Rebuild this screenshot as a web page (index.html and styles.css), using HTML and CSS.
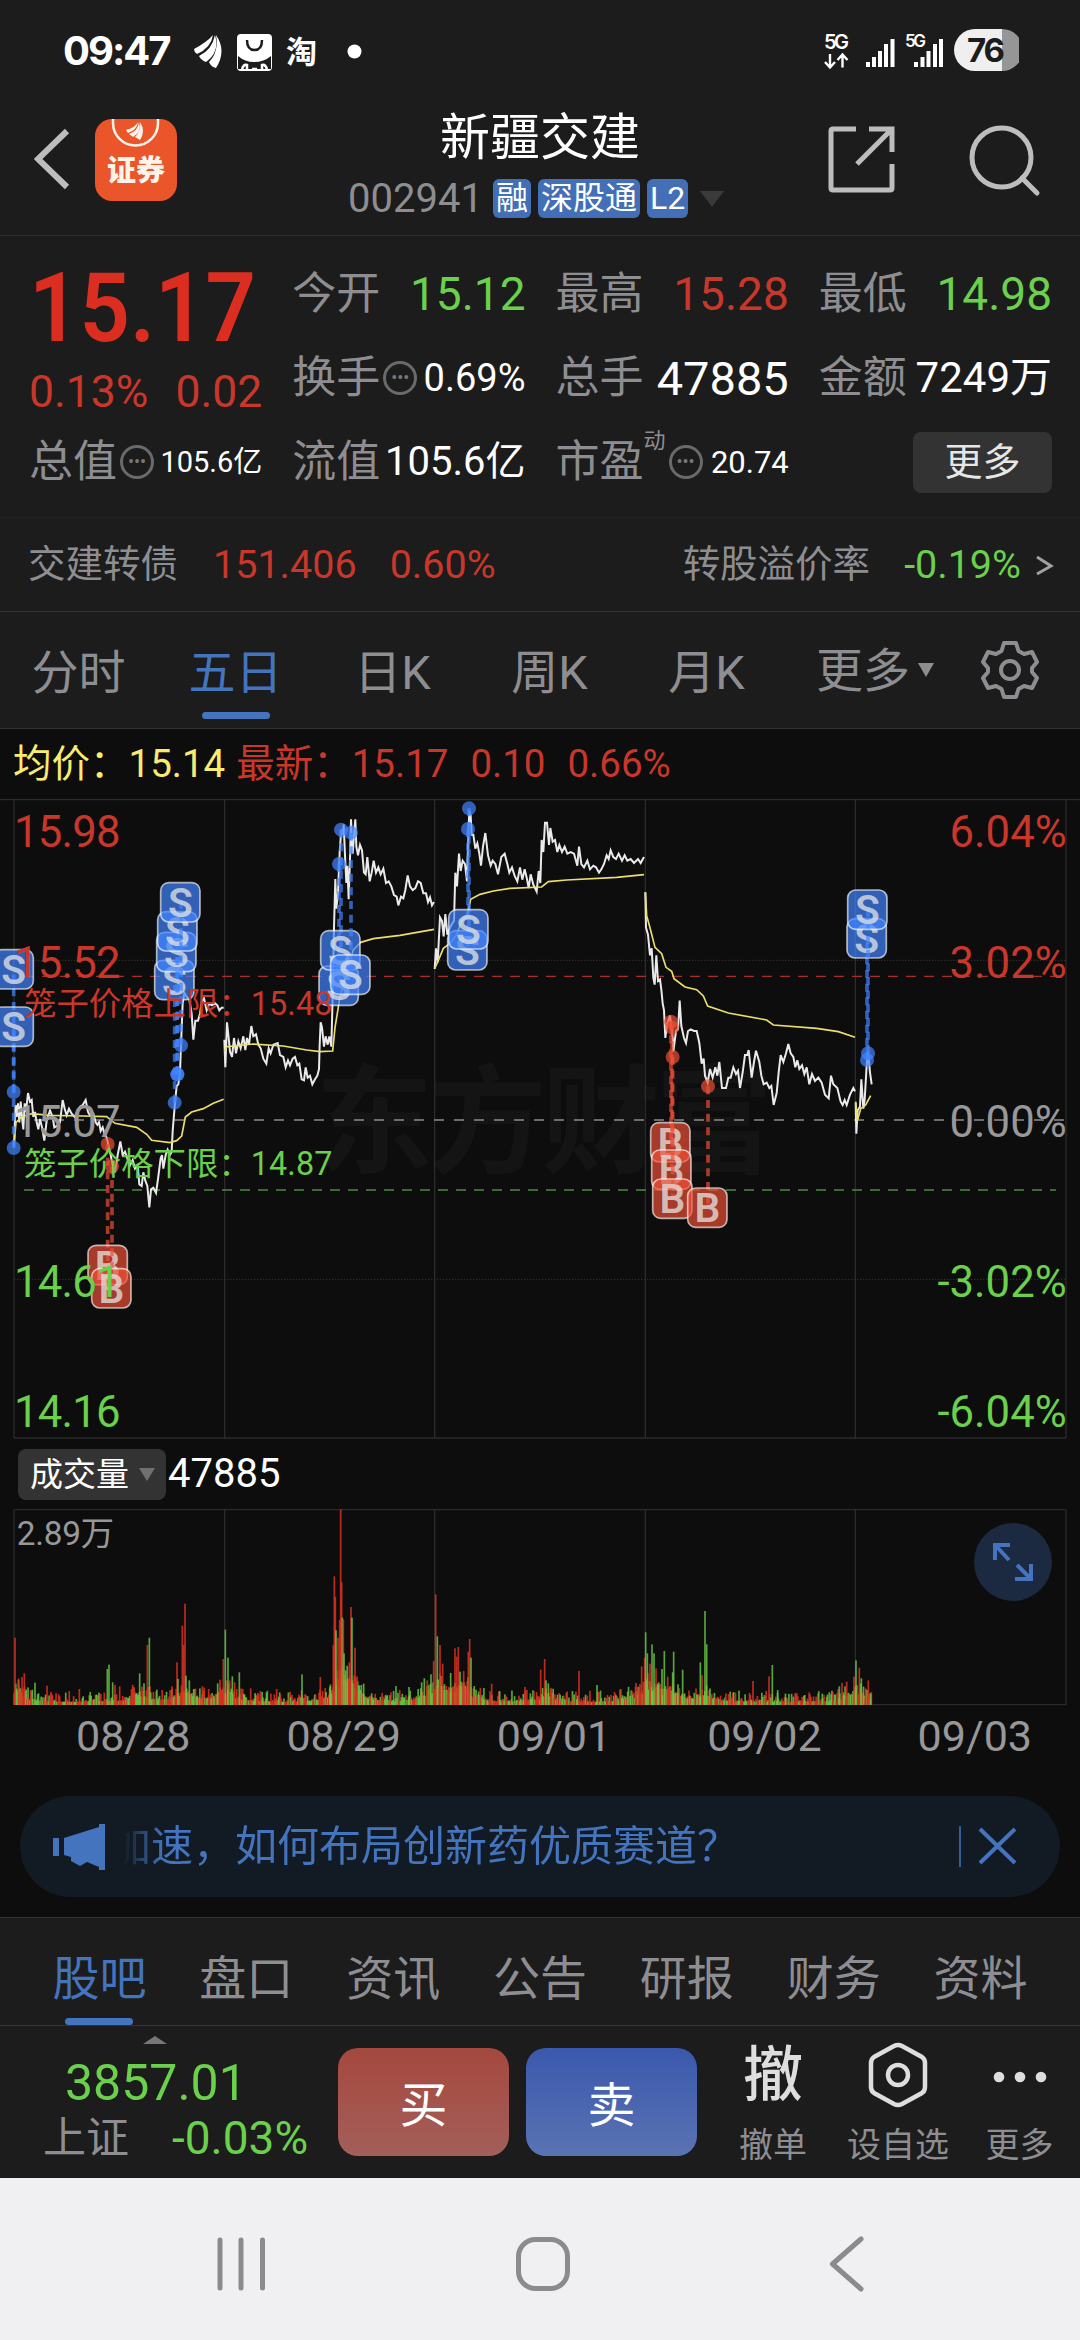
FILE: index.html
```html
<!DOCTYPE html>
<html lang="zh-CN">
<head>
    <meta charset="UTF-8">
    <meta name="viewport" content="width=device-width, initial-scale=1.0">
    <title>新疆交建 002941</title>
    <link rel="stylesheet" href="styles.css">
</head>
<body>
    <div class="status-bar">
        <span class="clock">09:47</span>
        <svg class="status-left" width="190" height="50" viewBox="0 0 190 50">
            <g fill="#fff">
                <path d="M1 15 Q14 8 20 1 Q18 14 4 20 Q1 18 1 15z"/>
                <path d="M6 22 Q19 16 22 1 Q27 18 13 28 Q8 26 6 22z"/>
                <path d="M16 28 Q26 18 23 1 Q34 17 23 34 Q18 33 16 28z"/>
                <rect x="44" y="0" width="35" height="37" rx="4"/>
            </g>
            <path d="M54 6 Q54 16 61.500 16 Q69 16 69 6" fill="none" stroke="#1c1c1c" stroke-width="2.500"/>
            <path d="M45 22 Q52 28 61 28 Q71 28 78 22 V35 H45z" fill="#1c1c1c"/>
            <path d="M49 36 Q50 30 54 31 V36 M69 36 V31 Q73 30 74 36 M59 35 h5" fill="none" stroke="#fff" stroke-width="2.500"/>
            <text x="93" y="29" class="tao">淘</text>
            <circle cx="161.500" cy="17.500" r="7" fill="#fff"/>
        </svg>
        <svg class="status-right" width="195" height="44" viewBox="0 0 195 44">
            <text x="0" y="20" class="net" textLength="25">5G</text>
            <path d="M6 25 V38 M1 33 L6 38.500 L11 33 M18.500 38.500 V25.500 M13.500 31 L18.500 25.500 L23.500 31" fill="none" stroke="#fff" stroke-width="2.400"/>
            <path d="M44 38 v-5 M50 38 v-10 M56 38 v-16 M62 38 v-23 M68.500 38 v-28" stroke="#fff" stroke-width="4"/>
            <text x="81" y="18" class="net small" textLength="21">5G</text>
            <path d="M92 38 v-5 M98.500 38 v-10 M104.500 38 v-16 M111 38 v-23 M117 38 v-28" stroke="#fff" stroke-width="4"/>
            <path d="M151 0 H178 V42 H151 A21 21 0 0 1 151 0z" fill="#efefef"/>
            <path d="M178 0 A21 21 0 0 1 178 42z" fill="#969696"/>
            <text x="161" y="33" class="battery">76</text>
        </svg>
    </div>

    <div class="header">
        <svg class="back" width="36" height="62" viewBox="0 0 36 62">
            <path d="M33 3 L4 31 L33 59" fill="none" stroke="#bdbdbd" stroke-width="6"/>
        </svg>
        <svg class="logo" width="82" height="82" viewBox="0 0 82 82">
            <rect width="82" height="82" rx="17" fill="#ea5529"/>
            <path d="M18 0 V4 A22.500 22.500 0 0 0 63 4 V0" fill="none" stroke="#fff3ea" stroke-width="2.500"/>
            <g fill="#fff3ea">
                <path d="M31 11 Q41 8 43 3 Q42 11 33 14z"/>
                <path d="M34 15 Q43 12 44 3 Q47 13 38 18z"/>
                <path d="M40 18 Q46 12 45 3 Q51 12 45 21z"/>
            </g>
            <text x="41" y="62" text-anchor="middle" class="logo-text">证券</text>
        </svg>
        <div class="title">
            <div class="stock-name">新疆交建</div>
            <div class="stock-code">
                <span class="code">002941</span>
                <span class="tag">融</span>
                <span class="tag">深股通</span>
                <span class="tag">L2</span>
                <i class="tri-down"></i>
            </div>
        </div>
        <svg class="share" width="68" height="68" viewBox="0 0 68 68">
            <path d="M28 3 H5 Q3 3 3 5 V62 Q3 64 5 64 H62 Q64 64 64 62 V38 M41 3 H64 V26 M63 4 L29 38" fill="none" stroke="#bdbdbd" stroke-width="5"/>
        </svg>
        <svg class="search" width="72" height="72" viewBox="0 0 72 72">
            <circle cx="32.500" cy="32.500" r="29.500" fill="none" stroke="#bdbdbd" stroke-width="5"/>
            <path d="M53 53 L68 68" stroke="#bdbdbd" stroke-width="5" stroke-linecap="round"/>
        </svg>
    </div>

    <div class="quote">
        <div class="now">
            <div class="price">15.17</div>
            <div class="change"><span>0.13%</span><span>0.02</span></div>
        </div>
        <div class="cell"><label>今开</label><b class="green s46">15.12</b></div>
        <div class="cell"><label>最高</label><b class="red s46">15.28</b></div>
        <div class="cell"><label>最低</label><b class="green s46">14.98</b></div>
        <div class="cell"><label>换手</label><i class="more-dot">•••</i><b class="s39">0.69%</b></div>
        <div class="cell"><label>总手</label><b class="s47">47885</b></div>
        <div class="cell"><label>金额</label><b class="s43">7249万</b></div>
        <div class="cell"><label>总值</label><i class="more-dot">•••</i><b class="s30">105.6亿</b></div>
        <div class="cell"><label>流值</label><b class="s41">105.6亿</b></div>
        <div class="cell"><label>市盈</label><sup>动</sup><i class="more-dot">•••</i><b class="s31">20.74</b></div>
        <div class="cell"><button class="more-btn">更多</button></div>
    </div>

    <div class="bond">
        <span class="bond-name">交建转债</span>
        <span class="red bond-price">151.406</span>
        <span class="red">0.60%</span>
        <span class="bond-rate">转股溢价率</span>
        <span class="green">-0.19%</span>
        <svg width="18" height="26" viewBox="0 0 18 26"><path d="M1 5 L15 14 L1 22" fill="none" stroke="#a0a0a0" stroke-width="3"/></svg>
    </div>

    <div class="tabs">
        <span>分时</span>
        <span class="active">五日</span>
        <span>日K</span>
        <span>周K</span>
        <span>月K</span>
        <span class="tab-more">更多<i></i></span>
        <svg width="60" height="60" viewBox="0 0 60 60">
            <path d="M24 3 H36 L38.500 11 L44 14 L52 12 L57 22 L52 28 V32 L57 38 L52 48 L44 46 L38.500 49 L36 57 H24 L21.500 49 L16 46 L8 48 L3 38 L8 32 V28 L3 22 L8 12 L16 14 L21.500 11z" fill="none" stroke="#8e8e92" stroke-width="4" stroke-linejoin="round"/>
            <circle cx="30" cy="30" r="9" fill="none" stroke="#8e8e92" stroke-width="4"/>
        </svg>
    </div>

    <div class="info">
        <span class="yellow">均价：15.14</span>
        <span class="red">最新：15.17</span>
        <span class="red">0.10</span>
        <span class="red">0.66%</span>
    </div>

    <!-- three chart units per pixel -->
    <svg class="chart" viewBox="0 27 3240 1920">
        <text class="watermark" x="945" y="1122" textLength="1375">东方财富</text>
        <g class="grid">
            <path d="M0 28.500 H3240 M42 1944 H3198"/>
            <path d="M42 30 V1944 M674 30 V1944 M1304 30 V1944 M1936 30 V1944 M2566 30 V1944 M3198 30 V1944"/>
            <path class="dots" d="M42 511 H3198 M42 1468 H3198"/>
        </g>
        <path class="zero" d="M102 990 H3198"/>
        <path class="cage-top" d="M72 559 H3170"/>
        <path class="cage-bottom" d="M72 1200 H3168"/>
        <g id="price-lines"></g>
        <g id="marks"></g>
        <g class="axis">
            <text x="42" y="171" class="f-red" textLength="320">15.98</text>
            <text x="42" y="564" class="f-red" textLength="320">15.52</text>
            <text x="42" y="1041" class="f-gray" textLength="320">15.07</text>
            <text x="42" y="1520" class="f-green" textLength="320">14.61</text>
            <text x="42" y="1912" class="f-green" textLength="320">14.16</text>
            <text x="3200" y="171" class="f-red end">6.04%</text>
            <text x="3200" y="564" class="f-red end">3.02%</text>
            <text x="3200" y="1041" class="f-gray end">0.00%</text>
            <text x="3200" y="1520" class="f-green end">-3.02%</text>
            <text x="3200" y="1912" class="f-green end">-6.04%</text>
        </g>
        <g class="cage">
            <text x="72" y="675" class="f-red" textLength="925">笼子价格上限：15.48</text>
            <text x="72" y="1154" class="f-green" textLength="925">笼子价格下限：14.87</text>
        </g>
    </svg>

    <div class="volume-head">
        <button>成交量<i></i></button>
        <span>47885</span>
    </div>

    <div class="volume">
        <svg viewBox="0 27 3240 591">
            <path class="vgrid" d="M42 28.500 H3198 M42 28 V614 M674 28 V614 M1304 28 V614 M1936 28 V614 M2566 28 V614 M3198 28 V614 M42 614 H3198"/>
            <g id="bars"></g>
            <text x="50" y="135" class="vol-max" textLength="292">2.89万</text>
        </svg>
        <div class="expand">
            <svg width="42" height="42" viewBox="0 0 42 42">
                <path d="M17 19 L4 5 M3 19 V4 H18 M25 24 L38 37 M39 23 V38 H23" fill="none" stroke="#4374bd" stroke-width="4"/>
            </svg>
        </div>
    </div>

    <div class="dates">
        <span>08/28</span><span>08/29</span><span>09/01</span><span>09/02</span><span>09/03</span>
    </div>

    <div class="notice">
        <svg class="horn" width="52" height="46" viewBox="0 0 52 46">
            <path d="M0 14 H6 V32 H0z M11 14 L46 3 V0 H52 V46 H46 V43 L34 38 L27 42 L18 37 V33 L11 31z" fill="#4374bd"/>
        </svg>
        <div class="notice-text"><span>加速，如何布局创新药优质赛道？</span></div>
        <svg class="close" width="60" height="44" viewBox="0 0 60 44">
            <path d="M1 1 V42" stroke="#4374bd" stroke-width="1.500"/>
            <path d="M21 4 L56 38 M56 4 L21 38" stroke="#4374bd" stroke-width="4"/>
        </svg>
    </div>

    <div class="sub-tabs">
        <span class="active">股吧</span>
        <span>盘口</span>
        <span>资讯</span>
        <span>公告</span>
        <span>研报</span>
        <span>财务</span>
        <span>资料</span>
    </div>

    <div class="trade-bar">
        <div class="index">
            <i class="tri-up"></i>
            <div class="index-value">3857.01</div>
            <div class="index-row"><span>上证</span><span class="green">-0.03%</span></div>
        </div>
        <button class="buy">买</button>
        <button class="sell">卖</button>
        <div class="tool cancel"><em>撤</em><span>撤单</span></div>
        <div class="tool pick">
            <svg width="60" height="66" viewBox="0 0 60 66">
                <path d="M26 4 Q30 2 34 4 L54 15 Q57 17 57 21 V45 Q57 49 54 51 L34 62 Q30 64 26 62 L6 51 Q3 49 3 45 V21 Q3 17 6 15z" fill="none" stroke="#dedede" stroke-width="4.500"/>
                <circle cx="30" cy="33" r="10" fill="none" stroke="#dedede" stroke-width="4.500"/>
            </svg>
            <span>设自选</span>
        </div>
        <div class="tool rest">
            <svg width="54" height="66" viewBox="0 0 54 66" fill="#dedede">
                <circle cx="6" cy="35" r="5.300"/><circle cx="27" cy="35" r="5.300"/><circle cx="48" cy="35" r="5.300"/>
            </svg>
            <span>更多</span>
        </div>
    </div>

    <div class="nav-bar">
        <svg width="1080" height="162" viewBox="0 0 1080 162" fill="none" stroke="#8b8b8b" stroke-width="5">
            <path d="M220 62 V110 M241 62 V110 M262.500 62 V110" stroke-linecap="round"/>
            <rect x="518.500" y="61.500" width="49" height="49" rx="17"/>
            <path d="M861 61 L832.500 86 L861 111" stroke-linecap="round" stroke-linejoin="round"/>
        </svg>
    </div>

    <script src="chart.js"></script>
</body>
</html>
```
FILE: styles.css
```css
* {
    box-sizing: border-box;
}

body {
    margin: 0;
    width: 1080px;
    height: 2340px;
    overflow: hidden;
    background: #0d0d0d;
    color: #fff;
    font-family: Roboto, "Noto Sans CJK SC", sans-serif;
    line-height: 1;
    display: flex;
    flex-direction: column;
}

button {
    border: none;
    padding: 0;
    color: #fff;
    font-family: inherit;
    line-height: 1;
}

i, em {
    font-style: normal;
}

svg {
    display: block;
    flex: none;
}

.red { color: #c9372b; }
.green { color: #6bd04b; }
.yellow { color: #f8ec70; }
.f-red { fill: #c9372b; }
.f-green { fill: #6bd04b; }
.f-gray { fill: #98989a; }

/* status bar */
.status-bar {
    height: 100px;
    flex: none;
    display: flex;
    align-items: flex-start;
    padding: 29px 61px 0 63px;
    background: #1c1c1c;
}

.clock {
    width: 130px;
    font: 700 40px/44px Inter, sans-serif;
    letter-spacing: -2px;
    white-space: nowrap;
}

.status-left {
    margin-top: 5px;
}

.status-right {
    margin-left: auto;
}

.tao {
    font: 700 31px "Noto Sans CJK SC", sans-serif;
    fill: #fff;
}

.net {
    font: 600 20px Inter, sans-serif;
    fill: #fff;
}

.net.small {
    font-size: 17px;
}

.battery {
    font: 700 33px Inter, sans-serif;
    letter-spacing: -2px;
    fill: #1c1c1c;
    text-anchor: middle;
}

/* title */
.header {
    height: 136px;
    flex: none;
    display: flex;
    align-items: flex-start;
    background: #1c1c1c;
    border-bottom: 1px solid #303030;
}

.back {
    margin: 28px 25px 0 34px;
}

.logo {
    margin-top: 19px;
}

.logo-text {
    font: 900 29px "Noto Sans CJK SC", sans-serif;
    fill: #fff3ea;
}

.title {
    width: 540px;
    flex: none;
    margin-left: 114px;
    padding: 11px 0 0 57px;
}

.stock-name {
    margin-left: 92px;
    font-size: 50px;
    line-height: 54px;
}

.stock-code {
    display: flex;
    align-items: center;
    margin-top: 14px;
    height: 39px;
    gap: 7px;
}

.code {
    width: 138px;
    color: #8e8e92;
    font-size: 40px;
}

.tag {
    height: 39px;
    padding: 0 3px;
    border-radius: 6px;
    background: #426fb5;
    font-size: 32px;
    line-height: 38px;
}

.tri-down {
    margin-left: 5px;
    border: 12px solid transparent;
    border-top: 16px solid #3a3a3a;
    border-bottom: 0;
}

.share {
    margin-left: -3px;
    margin-top: 26px;
}

.search {
    margin: 25px 0 0 73px;
}

/* quote */
.quote {
    height: 281px;
    flex: none;
    display: grid;
    grid-template-columns: repeat(4, minmax(0, 1fr));
    grid-template-rows: repeat(3, 84px);
    column-gap: 30px;
    padding: 16px 28px 0 29px;
    background: #1c1c1c;
}

.now {
    grid-row: span 2;
    padding-top: 8px;
}

.price {
    color: #db2d20;
    font-size: 96px;
    font-weight: 600;
    line-height: 96px;
    white-space: nowrap;
    transform: scaleX(0.92);
    transform-origin: left;
}

.change {
    display: flex;
    justify-content: space-between;
    margin-top: 14px;
    color: #c9372b;
    font-size: 44.5px;
}

.cell {
    display: flex;
    align-items: center;
    white-space: nowrap;
}

.cell label {
    color: #8e8e92;
    font-size: 44px;
}

.cell b {
    margin-left: auto;
    font-weight: 400;
}

.cell sup {
    align-self: flex-start;
    margin-top: 10px;
    color: #8e8e92;
    font-size: 22px;
}

.more-dot {
    width: 34px;
    height: 34px;
    margin-left: 3px;
    flex: none;
    border: 3px solid #6a6a6c;
    border-radius: 50%;
    color: #77777a;
    font-size: 18px;
    line-height: 28px;
    text-align: center;
}

.s46 { font-size: 46px; }
.s47 { font-size: 47px; font-weight: 500; }
.s43 { font-size: 42px; }
.s41 { font-size: 40px; }
.s39 { font-size: 38px; }
.s31 { font-size: 31px; }
.s30 { font-size: 29px; }

.more-btn {
    width: 139px;
    height: 61px;
    margin-left: auto;
    border-radius: 8px;
    background: #333;
    color: #e6e6e6;
    font-size: 38px;
}

.bond {
    height: 95px;
    flex: none;
    display: flex;
    align-items: center;
    padding: 1px 26px 0 28px;
    background: #1c1c1c;
    border-bottom: 1px solid #333;
    box-shadow: inset 0 1px #222;
    font-size: 39.5px;
}

.bond-name, .bond-rate {
    color: #8e8e92;
    font-size: 37.5px;
}

.bond-price {
    margin: 0 33px 0 35px;
}

.bond-rate {
    margin: 0 34px 0 auto;
}

.bond svg {
    margin-left: 15px;
}

/* period tabs */
.tabs {
    height: 117px;
    flex: none;
    display: flex;
    align-items: center;
    background: #1c1c1c;
    border-bottom: 1px solid #333;
    color: #8e8e92;
    font-size: 47px;
}

.tabs span {
    position: relative;
    width: 157px;
    height: 116px;
    line-height: 121px;
    text-align: center;
    white-space: nowrap;
}

.active {
    color: #4374bd;
}

.active::after {
    content: "";
    position: absolute;
    left: 50%;
    bottom: 9px;
    width: 68px;
    height: 7px;
    margin-left: -34px;
    border-radius: 4px;
    background: #4374bd;
}

.tabs .tab-more {
    width: 195px;
    padding-left: 31px;
    display: flex;
    align-items: center;
}

.tab-more i {
    margin-left: 8px;
    border: 8px solid transparent;
    border-top: 14px solid #8e8e92;
    border-bottom: 0;
}

.info {
    height: 70px;
    flex: none;
    display: flex;
    align-items: center;
    padding: 1px 0 0 13px;
    font-size: 38.5px;
}

.info span {
    margin-right: 22px;
}

.info .yellow {
    margin-right: 11px;
}

/* price chart */
.chart {
    width: 1080px;
    height: 640px;
}

.watermark {
    font: 700 355px "Noto Sans CJK SC", sans-serif;
    fill: #141414;
}

.grid path {
    fill: none;
    stroke: #2b2b2b;
    stroke-width: 4;
}

.grid .dots {
    stroke: #333;
    stroke-width: 3;
    stroke-dasharray: 4 5;
}

.zero {
    stroke: #8c8c8e;
    stroke-width: 5;
    stroke-dasharray: 30 30;
}

.cage-top {
    stroke: #a32f28;
    stroke-width: 4;
    stroke-dasharray: 30 24;
}

.cage-bottom {
    stroke: #46903a;
    stroke-width: 4;
    stroke-dasharray: 30 24;
}

.price-line, .avg-line {
    fill: none;
    stroke: #eaeaea;
    stroke-width: 6;
}

.avg-line {
    stroke: #eadf6b;
    stroke-width: 5;
}

.stem {
    stroke-width: 11;
    stroke-dasharray: 24 17;
}

.mark {
    stroke: #fff;
    stroke-opacity: 0.65;
    stroke-width: 5;
}

.mark-text {
    font: 600 122px Roboto, sans-serif;
    text-anchor: middle;
    fill: #e4e4e4;
    fill-opacity: 0.75;
}

.axis {
    font-size: 131px;
}

.end {
    text-anchor: end;
}

.cage {
    font-size: 97px;
}

/* volume */
.volume-head {
    height: 70px;
    flex: none;
    display: flex;
    align-items: center;
    padding-left: 18px;
    font-size: 40px;
}

.volume-head button {
    width: 148px;
    height: 51px;
    margin-right: 2px;
    padding-left: 12px;
    display: flex;
    align-items: center;
    border-radius: 8px;
    background: #333;
    font-size: 33px;
}

.volume-head i {
    margin-left: 10px;
    border: 8px solid transparent;
    border-top: 13px solid #707070;
    border-bottom: 0;
}

.volume {
    position: relative;
    height: 197px;
    flex: none;
}

.volume > svg {
    width: 1080px;
    height: 197px;
}

.vgrid {
    fill: none;
    stroke: #2b2b2b;
    stroke-width: 4;
}

.vol-max {
    font-size: 100px;
    fill: #98989a;
}

.expand {
    position: absolute;
    right: 28px;
    top: 14px;
    width: 78px;
    height: 78px;
    display: flex;
    align-items: center;
    justify-content: center;
    border-radius: 50%;
    background: #1c2a41;
}

.dates {
    height: 90px;
    flex: none;
    display: flex;
    padding: 5px 0 0 28px;
    color: #98989a;
    font-size: 43px;
    line-height: 50px;
}

.dates span {
    width: 210.5px;
    text-align: center;
}

/* notice */
.notice {
    height: 101px;
    flex: none;
    display: flex;
    align-items: center;
    margin: 0 20px 20px;
    padding: 0 41px 0 33px;
    border-radius: 51px;
    background: #121a24;
    color: #4374bd;
}

.notice-text {
    width: 800px;
    margin-left: 18px;
    overflow: hidden;
    font-size: 42px;
    line-height: 60px;
    white-space: nowrap;
    -webkit-mask-image: linear-gradient(90deg, transparent, #000 40px);
    mask-image: linear-gradient(90deg, transparent, #000 40px);
}

.notice-text span {
    margin-left: -14px;
}

.close {
    margin-left: auto;
}

.sub-tabs {
    height: 109px;
    flex: none;
    display: flex;
    padding: 0 26px;
    background: #1c1c1c;
    border-top: 1px solid #333;
    border-bottom: 1px solid #333;
    color: #8e8e92;
    font-size: 47px;
}

.sub-tabs span {
    position: relative;
    width: 147px;
    line-height: 122px;
    text-align: center;
}

.sub-tabs .active::after {
    bottom: 0;
}

/* bottom bar */
.trade-bar {
    height: 152px;
    flex: none;
    display: flex;
    background: #1c1c1c;
}

.index {
    width: 338px;
    flex: none;
    padding: 10px 0 0 43px;
}

.tri-up {
    display: block;
    width: 0;
    margin-left: 100px;
    border: 12px solid transparent;
    border-bottom: 8px solid #77777a;
    border-top: 0;
}

.index-value {
    margin: 14px 0 7px 22px;
    color: #6bd04b;
    font-size: 50px;
}

.index-row {
    display: flex;
    align-items: center;
    color: #8e8e92;
    font-size: 43px;
}

.index-row .green {
    margin-left: 43px;
    color: #6bd04b;
    font-size: 46px;
}

.buy, .sell {
    width: 171px;
    height: 108px;
    flex: none;
    margin-top: 22px;
    padding-top: 8px;
    border-radius: 20px;
    font-size: 48px;
}

.buy {
    background: linear-gradient(#a5483e, #a35f59);
}

.sell {
    margin-left: 17px;
    background: linear-gradient(#3a58ad, #5a73b3);
}

.tool {
    flex: none;
    display: flex;
    flex-direction: column;
    align-items: center;
    padding-top: 16px;
    color: #8e8e92;
    font-size: 34px;
    white-space: nowrap;
}

.tool span {
    margin-top: 20px;
}

.tool em {
    height: 66px;
    color: #dedede;
    font-size: 60px;
    font-weight: 500;
    line-height: 68px;
}

.cancel { width: 152px; }
.pick { width: 98px; }
.rest { width: 133px; padding-left: 12px; }

.nav-bar {
    height: 162px;
    flex: none;
    background: #f0f0f3;
}
```
FILE: chart.js
```js
// one string per trading day
const prices = [
    "42,1035 45,960 47,915 50,950 54,910 58,965 62,905 67,960 70,985 74,910 78,935 84,880 90,905 95,900 100,950 105,935 110,965 115,985 120,955 126,980 133,1018 140,960 150,930 158,950 163,980 172,975 180,965 188,900 194,925 200,945 207,925 215,940 224,950 232,935 240,920 248,915 257,900 264,935 270,945 280,940 287,965 292,972 297,965 302,990 308,980 314,1000 320,1010 325,1030 332,1060 338,1090 345,1110 353,1060 361,1020 368,1060 375,1050 382,1070 390,1090 398,1075 405,1100 413,1090 418,1145 425,1150 430,1110 436,1135 442,1150 448,1212 453,1160 460,1155 468,1170 474,1130 482,1070 486,1060 490,1100 497,1060 503,1045 510,1060 515,1050 518,990 524,920 530,860 535,855 540,820 543,740 548,620 553,590 560,600 568,610 575,650 580,725 586,670 594,670 600,650 605,615 612,605 620,640 628,620 635,625 645,620 652,625 658,640 665,632 671,632",
    "673,725 676,805 681,675 686,720 690,760 696,775 702,720 708,765 715,730 722,750 730,715 736,755 741,720 747,740 754,685 760,715 768,710 775,740 782,750 790,780 799,795 806,750 812,765 820,740 833,735 840,770 850,775 857,805 864,785 870,800 878,780 885,775 892,800 898,795 905,840 912,843 917,805 923,835 930,830 937,855 945,840 952,830 957,810 959,740 962,675 966,690 972,745 977,715 983,740 988,715 994,745 998,600 1002,400 1006,258 1009,345 1014,300 1019,180 1024,115 1029,130 1031,100 1035,190 1039,270 1042,220 1046,318 1050,200 1053,85 1058,185 1062,130 1066,85 1069,165 1074,190 1080,160 1086,175 1092,240 1097,245 1102,195 1109,265 1115,240 1121,205 1128,240 1135,225 1142,245 1150,228 1158,270 1166,265 1174,280 1182,305 1190,310 1195,335 1203,310 1210,315 1216,290 1223,248 1230,280 1238,290 1246,285 1254,265 1262,270 1270,300 1278,300 1284,325 1290,312 1296,335 1302,325",
    "1304,520 1308,460 1313,500 1320,370 1326,380 1331,425 1336,360 1342,420 1350,400 1358,385 1362,380 1366,240 1371,280 1377,185 1382,235 1388,205 1395,215 1401,265 1405,130 1408,60 1412,75 1415,130 1420,130 1426,170 1432,155 1438,185 1443,220 1449,165 1456,125 1464,190 1472,220 1478,205 1486,215 1494,245 1504,195 1514,185 1522,215 1528,240 1536,225 1544,250 1552,265 1560,225 1567,260 1574,230 1580,255 1586,285 1592,245 1600,275 1610,295 1616,235 1621,270 1625,145 1630,180 1635,95 1641,95 1647,160 1651,110 1658,150 1665,145 1672,180 1678,160 1686,180 1694,165 1702,185 1712,180 1722,185 1732,220 1737,165 1744,215 1752,225 1762,205 1770,230 1780,220 1788,225 1797,240 1804,230 1812,215 1820,190 1826,200 1832,175 1840,195 1848,200 1856,185 1866,205 1874,190 1882,205 1892,200 1902,212 1914,200 1922,212 1932,195",
    "1936,297 1938,400 1944,420 1950,480 1955,460 1960,545 1964,565 1969,480 1974,555 1980,550 1984,580 1988,620 1992,640 1996,720 2001,680 2010,655 2018,720 2020,760 2028,700 2034,695 2039,612 2044,685 2052,720 2058,735 2064,700 2072,695 2082,700 2090,700 2098,735 2105,795 2111,780 2115,830 2123,850 2130,810 2138,835 2146,805 2152,830 2158,790 2166,865 2178,865 2185,835 2192,835 2200,805 2208,825 2214,815 2220,865 2228,820 2235,770 2242,770 2246,755 2255,835 2262,790 2268,757 2278,790 2284,830 2291,855 2300,850 2308,865 2314,860 2321,915 2330,880 2336,820 2342,770 2350,790 2358,765 2365,738 2372,765 2380,775 2386,805 2392,785 2398,810 2406,800 2413,825 2420,805 2428,855 2436,825 2445,845 2455,835 2465,850 2475,885 2486,895 2493,830 2500,855 2512,865 2522,905 2528,915 2534,900 2540,915 2550,885 2560,865 2565,875",
    "2567,908 2569,998 2573,930 2580,920 2584,840 2590,925 2594,900 2600,800 2604,760 2610,820 2615,855"
];

const averages = [
    "42,1030 48,965 65,950 95,940 150,945 250,947 320,949 345,968 410,980 440,1000 455,1017 510,1024 530,1018 545,1005 556,950 575,935 610,925 640,910 671,898",
    "674,760 680,745 760,738 850,743 920,755 960,760 998,758 1005,690 1020,600 1040,530 1060,465 1082,442 1120,432 1200,422 1302,405",
    "1304,518 1315,495 1330,460 1350,445 1370,420 1385,380 1403,360 1412,318 1440,303 1480,293 1530,286 1625,282 1645,266 1700,261 1850,254 1932,246",
    "1936,297 1940,365 1950,400 1965,457 1985,475 1998,515 2015,527 2022,548 2055,572 2090,580 2110,598 2123,627 2185,648 2300,668 2320,682 2450,692 2515,702 2565,718",
    "2567,905 2572,960 2582,925 2597,915 2612,888"
];

// type, point on the line, centre of the badge
const trades = [
    ["S", 41, 877, 41, 521], ["S", 41, 1040, 41, 687],
    ["S", 524, 908, 523, 552], ["S", 532, 826, 529, 470], ["S", 532, 826, 532, 410], ["S", 543, 742, 541, 326],
    ["S", 1017, 215, 1016, 568], ["S", 1023, 115, 1021, 466], ["S", 1053, 124, 1051, 536],
    ["S", 1404, 113, 1402, 466], ["S", 1407, 53, 1405, 405],
    ["S", 2601, 784, 2600, 431], ["S", 2604, 765, 2602, 348],
    ["B", 323, 1028, 323, 1379], ["B", 336, 1093, 334, 1447],
    ["B", 2013, 673, 2011, 1023], ["B", 2016, 690, 2014, 1103], ["B", 2018, 775, 2017, 1187], ["B", 2124, 861, 2122, 1213]
];

// data units to chart units
const SCALE_Y = 1.033;
const toY = y => Math.round(y * SCALE_Y);
const toPoints = p => p.split(" ").map(pair => {
    const [x, y] = pair.split(",");
    return x + "," + toY(y);
}).join(" ");

const lines = document.getElementById("price-lines");
lines.innerHTML =
    prices.map(p => `<polyline class="price-line" points="${toPoints(p)}"/>`).join("") +
    averages.map(p => `<polyline class="avg-line" points="${toPoints(p)}"/>`).join("");

document.getElementById("marks").innerHTML = trades.map(([type, x, y, bx, by]) => {
    const color = type === "S" ? "rgba(66,133,255,.7)" : "rgba(240,80,55,.68)";
    return `<line class="stem" x1="${x}" y1="${toY(y)}" x2="${x}" y2="${toY(by)}" stroke="${color}"/>
        <circle cx="${x}" cy="${toY(y)}" r="21" fill="${color}"/>
        <rect class="mark" x="${bx - 59}" y="${toY(by) - 59}" width="118" height="118" rx="24" fill="${color}"/>
        <text class="mark-text" x="${bx}" y="${toY(by) + 44}">${type}</text>`;
}).join("");

// volume: x, height, r/g
const peaks = [
    [45, 202, "r"], [56, 80, "r"], [66, 84, "r"], [73, 95, "r"], [105, 67, "g"], [141, 58, "r"], [238, 48, "r"],
    [322, 108, "g"], [327, 121, "g"], [338, 68, "g"], [345, 60, "r"], [359, 56, "r"], [398, 61, "r"],
    [419, 95, "g"], [432, 65, "g"], [442, 180, "r"], [448, 202, "g"], [516, 56, "r"], [531, 128, "r"], [534, 78, "g"],
    [547, 238, "r"], [551, 180, "r"], [555, 304, "r"], [558, 88, "g"], [607, 56, "r"], [653, 65, "g"], [660, 76, "r"],
    [670, 138, "r"], [676, 226, "g"], [684, 142, "g"], [697, 86, "g"], [704, 68, "r"], [718, 98, "g"], [752, 50, "r"],
    [830, 48, "r"], [906, 92, "g"], [961, 84, "r"], [990, 55, "g"], [1000, 180, "r"], [1003, 386, "r"], [1006, 325, "r"],
    [1008, 224, "g"], [1014, 202, "r"], [1019, 255, "r"], [1022, 587, "r"], [1025, 368, "r"], [1027, 262, "g"],
    [1030, 256, "r"], [1032, 155, "g"], [1037, 104, "g"], [1048, 128, "r"], [1053, 294, "r"], [1056, 262, "g"],
    [1065, 172, "r"], [1071, 86, "r"], [1084, 60, "g"], [1091, 64, "g"], [1188, 57, "g"], [1227, 54, "g"],
    [1265, 68, "g"], [1273, 80, "g"], [1282, 74, "r"], [1293, 92, "g"], [1301, 132, "r"], [1307, 332, "r"],
    [1312, 206, "g"], [1320, 180, "r"], [1328, 124, "r"], [1352, 96, "g"], [1365, 170, "r"], [1370, 145, "r"],
    [1375, 174, "r"], [1380, 100, "g"], [1391, 102, "r"], [1405, 160, "r"], [1409, 198, "r"], [1413, 142, "g"],
    [1475, 64, "r"], [1575, 54, "r"], [1622, 106, "r"], [1634, 138, "r"], [1638, 74, "g"], [1645, 65, "g"],
    [1737, 102, "r"], [1791, 60, "g"], [1860, 46, "r"], [1908, 66, "r"], [1925, 116, "r"], [1934, 142, "r"],
    [1937, 218, "g"], [1942, 155, "g"], [1950, 124, "r"], [1956, 182, "g"], [1962, 155, "g"], [1968, 110, "r"],
    [1976, 68, "g"], [1986, 108, "g"], [1993, 162, "g"], [2003, 85, "r"], [2018, 98, "g"], [2021, 160, "g"],
    [2034, 62, "g"], [2048, 106, "g"], [2101, 128, "g"], [2106, 90, "r"], [2115, 282, "g"], [2120, 182, "g"],
    [2259, 72, "r"], [2307, 86, "r"], [2317, 120, "g"], [2333, 45, "g"], [2518, 56, "g"], [2526, 66, "r"],
    [2540, 70, "r"], [2562, 85, "r"], [2568, 134, "g"], [2578, 112, "r"], [2584, 80, "g"], [2597, 50, "r"],
    [2605, 74, "r"], [2612, 34, "g"]
];

// minor bars between the peaks, higher around the open and the close
let seed = 17;
function rnd() {
    seed = (seed * 16807) % 2147483647;
    return seed / 2147483647;
}

const busy = [[45, 50], [420, 30], [555, 40], [675, 50], [1025, 90], [1060, 35], [1310, 70], [1390, 60], [1640, 30], [1945, 80], [2010, 40], [2115, 30], [2570, 45]];
let bars = [];
for (let x = 42; x < 2615; x += 2.63) {
    let h = 9 + Math.pow(rnd(), 2.5) * 34;
    busy.forEach(([c, a]) => {
        h += a * Math.exp(-Math.abs(x - c) / 32) * (0.4 + rnd() * 0.7);
    });
    bars.push([x, h, rnd() > 0.48 ? "r" : "g"]);
}
bars = bars.concat(peaks);

document.getElementById("bars").innerHTML = bars.map(([x, h, c]) =>
    `<rect x="${(x - 2.5).toFixed(1)}" y="${(615 - h).toFixed(1)}" width="5" height="${h.toFixed(1)}" fill="${c === "r" ? "rgba(218,50,34,.85)" : "rgba(105,205,70,.8)"}"/>`
).join("");
```
